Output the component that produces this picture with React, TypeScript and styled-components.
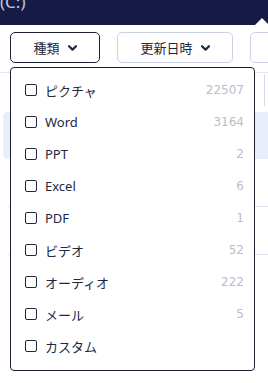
import styled, {createGlobalStyle} from "styled-components";

const GlobalStyle = createGlobalStyle`
  html, body {
    margin: 0;
    padding: 0;
    background: #ffffff;
  }
  body {
    font-family: "Noto Sans", "Noto Sans CJK JP", sans-serif;
    color: #22273f;
  }
`;

type FileType = {label: string; count?: number};

const fileTypes: FileType[] = [
  {label: 'ピクチャ', count: 22507},
  {label: 'Word', count: 3164},
  {label: 'PPT', count: 2},
  {label: 'Excel', count: 6},
  {label: 'PDF', count: 1},
  {label: 'ビデオ', count: 52},
  {label: 'オーディオ', count: 222},
  {label: 'メール', count: 5},
  {label: 'カスタム'},
];

const Page = styled.div`
  position: relative;
  width: 268px;
  height: 383px;
  overflow: hidden;
  background: #ffffff;
`;

const Header = styled.header`
  position: relative;
  height: 25px;
  background: #151b45;
  overflow: hidden;
`;

const Drive = styled.span`
  display: block;
  margin-top: -7px;
  font-size: 17px;
  line-height: 17px;
  color: #c3c7d9;
`;

const Notch = styled.span`
  position: absolute;
  right: -1px;
  bottom: 0;
  width: 0;
  height: 0;
  border-left: 7px solid transparent;
  border-right: 7px solid transparent;
  border-bottom: 7px solid #ffffff;
`;

const Toolbar = styled.div`
  display: flex;
  gap: 17px;
  padding: 7px 0 0 10px;
  white-space: nowrap;
`;

const FilterButton = styled.button<{$active?: boolean; $width: number}>`
  flex: none;
  display: flex;
  align-items: center;
  justify-content: center;
  gap: 8px;
  box-sizing: border-box;
  width: ${({$width}) => $width}px;
  height: 31px;
  padding: 0;
  border: 1px solid ${({$active}) => ($active ? '#1f2233' : '#cbd2e6')};
  border-radius: 5px;
  background: #ffffff;
  font-family: "Noto Sans CJK JP", sans-serif;
  font-size: 13px;
  color: #22273f;
`;

const List = styled.div`
  position: relative;
  display: flex;
  flex-direction: column;
  margin-top: 9px;
  border-top: 1px solid #e3e7f2;
`;

const ColumnHead = styled.div`
  position: relative;
  height: 39px;

  &::after {
    content: '';
    position: absolute;
    left: 264px;
    top: 1px;
    width: 1px;
    height: 32px;
    background: #d3d8e8;
  }
`;

const ListRow = styled.div<{$selected?: boolean; $divider?: boolean}>`
  box-sizing: border-box;
  height: ${({$selected}) => ($selected ? 47 : 48)}px;
  margin-left: ${({$selected}) => ($selected ? 3 : 8)}px;
  border-radius: ${({$selected}) => ($selected ? '5px 0 0 5px' : '0')};
  background: ${({$selected}) => ($selected ? '#e9eefd' : 'transparent')};
  border-bottom: ${({$divider}) => ($divider ? '1px solid #e3e7f2' : 'none')};
`;

const Menu = styled.div`
  position: absolute;
  left: 10px;
  top: 67px;
  box-sizing: border-box;
  width: 245px;
  padding: 6px 0 8px;
  border: 1px solid #1b1e2d;
  border-radius: 4px;
  background: #ffffff;
`;

const MenuItem = styled.label`
  display: flex;
  align-items: center;
  height: 32px;
  padding: 0 10px 0 14px;
  cursor: pointer;
`;

const CheckBox = styled.span`
  flex: none;
  box-sizing: border-box;
  width: 12px;
  height: 12px;
  border: 1.5px solid #22263d;
  border-radius: 2px;
`;

const Label = styled.span`
  flex: 1;
  margin-left: 8px;
  font-family: "Noto Sans", "Noto Sans CJK JP", sans-serif;
  font-size: 13px;
  color: #22273f;
`;

const Count = styled.span`
  font-family: "DejaVu Sans", "Noto Sans", sans-serif;
  font-size: 12px;
  color: #b9bdcc;
`;

function Chevron() {
  return (
    <svg width="9" height="6" viewBox="0 0 9 6" aria-hidden="true">
      <path d="M1 1.2 L4.5 4.6 L8 1.2" fill="none" stroke="#22273f" strokeWidth="2.2" strokeLinecap="round" strokeLinejoin="round"/>
    </svg>
  );
}

export default function App() {
  return (
    <Page>
      <GlobalStyle/>
      <Header>
        <Drive>(C:)</Drive>
        <Notch/>
      </Header>
      <Toolbar>
        <FilterButton $active $width={90}>種類<Chevron/></FilterButton>
        <FilterButton $width={116}>更新日時<Chevron/></FilterButton>
        <FilterButton $width={90}/>
      </Toolbar>
      <List>
        <ColumnHead/>
        <ListRow $selected/>
        <ListRow $divider/>
        <ListRow $divider/>
        <ListRow/>
      </List>
      <Menu>
        {fileTypes.map((type) => (
          <MenuItem key={type.label}>
            <CheckBox/>
            <Label>{type.label}</Label>
            {type.count !== undefined && <Count>{type.count}</Count>}
          </MenuItem>
        ))}
      </Menu>
    </Page>
  );
}
